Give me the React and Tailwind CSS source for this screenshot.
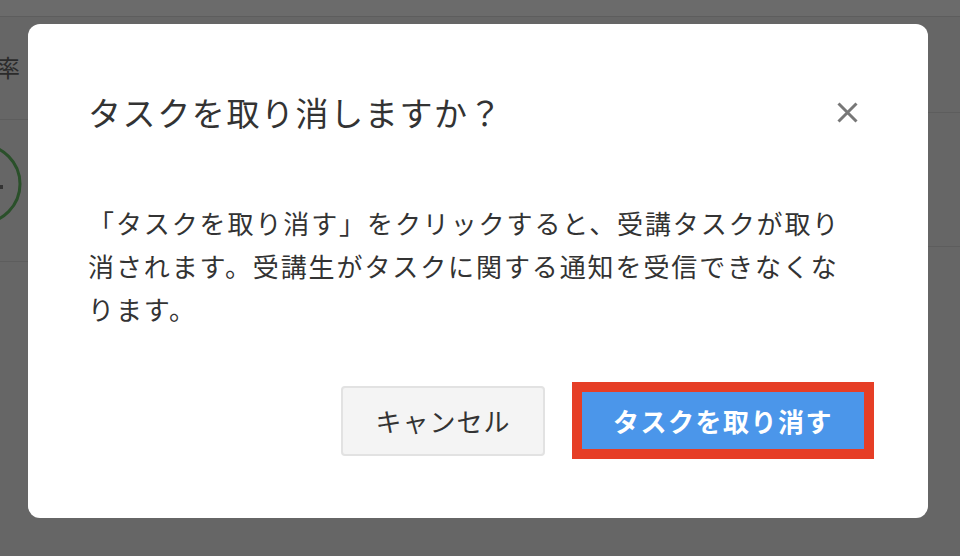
import React from "react";

export default function App() {
  const jp = { fontFamily: '"Noto Sans CJK JP", "Noto Sans", sans-serif' };
  return (
    <div className="relative w-[960px] h-[556px] overflow-hidden bg-[#666666]" style={jp}>
      {/* underlying page, dimmed */}
      <div className="h-[17px] bg-[#6b6b6b] border-b border-[#5d5d5d]"></div>
      <div className="flex">
        <div className="w-[60px]">
          <div className="h-[103px] border-b border-[#5d5d5d] pt-[35px]">
            <span className="block -ml-[4px] text-[24px] leading-[30px] text-[#2b2b2b]">率</span>
          </div>
          <div className="h-[142px] border-b border-[#5d5d5d] pt-[24px]">
            <svg width="30" height="84" viewBox="0 0 30 84">
              <circle cx="-19" cy="40" r="39" fill="none" stroke="#2a502a" strokeWidth="3" />
              <rect x="0" y="41" width="3" height="4" fill="#333" />
            </svg>
          </div>
        </div>
        <div className="flex-1"></div>
        <div className="w-[32px]">
          <div className="h-[96px] border-b border-[#5d5d5d]"></div>
          <div className="h-[134px] border-b border-[#5d5d5d]"></div>
        </div>
      </div>

      {/* modal overlay */}
      <div className="absolute inset-0 flex justify-start items-start pt-[24px] pl-[28px]">
        <div className="w-[900px] h-[494px] bg-white rounded-[12px] flex flex-col">
          <div className="flex items-center justify-between pt-[66px] pl-[60px] pr-[70px]">
            <h1 className="text-[33px] leading-[44px] tracking-[1.6px] text-[#333333] font-normal">
              タスクを取り消しますか？
            </h1>
            <button className="w-[21px] h-[21px] flex items-center justify-center">
              <svg width="21" height="21" viewBox="0 0 21 21">
                <path d="M1.5 1.5 L19.5 19.5 M19.5 1.5 L1.5 19.5" stroke="#777777" strokeWidth="3" strokeLinecap="butt" />
              </svg>
            </button>
          </div>
          <div className="pt-[67px] pl-[60px] pr-[40px] text-[26px] leading-[43px] tracking-[1.9px] text-[#333333]">
            <p className="whitespace-nowrap">「タスクを取り消す」をクリックすると、受講タスクが取り</p>
            <p className="whitespace-nowrap">消されます。受講生がタスクに関する通知を受信できなくな</p>
            <p className="whitespace-nowrap">ります。</p>
          </div>
          <div className="flex justify-end items-center gap-[27px] pt-[52px] pr-[54px]">
            <button className="w-[204px] h-[70px] bg-[#f4f4f4] border-2 border-[#e2e2e2] rounded-[4px] text-[26px] tracking-[1px] text-[#333333] flex items-center justify-center">
              キャンセル
            </button>
            <div className="border-[10px] border-[#e63e26]">
              <button className="w-[282px] h-[57px] bg-[#4b96ea] text-white text-[26px] font-bold tracking-[1.5px] flex items-center justify-center">
                タスクを取り消す
              </button>
            </div>
          </div>
        </div>
      </div>
    </div>
  );
}
